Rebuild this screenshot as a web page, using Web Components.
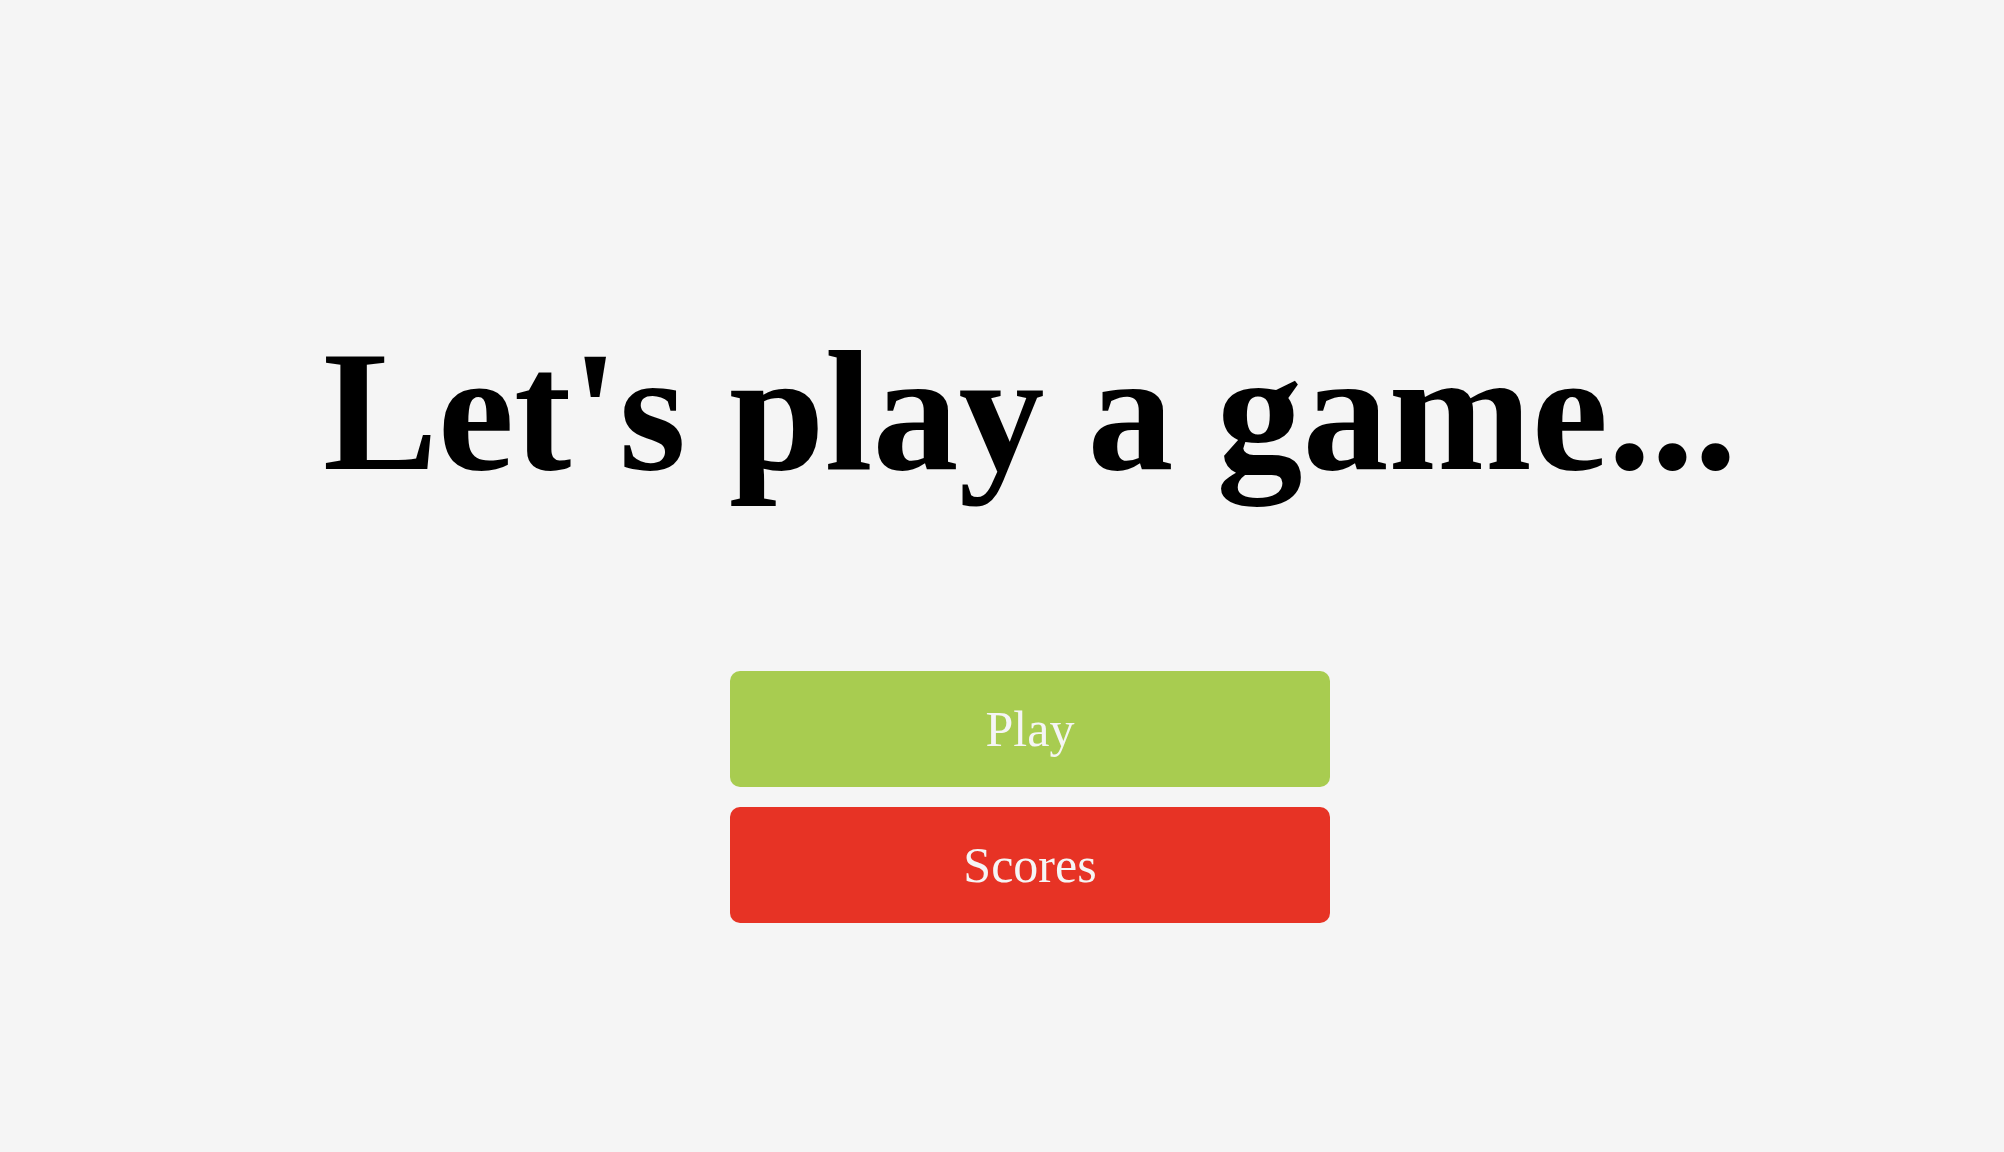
<!DOCTYPE html>
<html lang="en">
<head>
<meta charset="utf-8">
<meta name="viewport" content="width=device-width, initial-scale=1">
<title>Let's play a game...</title>
<style>
  body { margin: 0; background: #f5f5f5; font-family: "Liberation Serif", "Times New Roman", serif; }
</style>
</head>
<body>
<game-home>
  Let's play a game...
  <menu-button slot="actions" style="--button-color: #a8cc50">Play</menu-button>
  <menu-button slot="actions" style="--button-color: #e73325">Scores</menu-button>
</game-home>

<template id="home-template">
  <style>
    :host { display: flex; min-height: 100vh; box-sizing: border-box; padding: 78px 0 0 56px; }
    main { flex: 1; display: flex; flex-direction: column; align-items: center; justify-content: center; }
    h1 { margin: 0 0 156px; font-size: 172px; line-height: 208px; font-weight: 700; color: #000; text-align: center; }
    nav { display: flex; flex-direction: column; gap: 20px; width: 600px; max-width: 100%; }
  </style>
  <main>
    <h1><slot></slot></h1>
    <nav aria-label="Game menu"><slot name="actions"></slot></nav>
  </main>
</template>

<template id="button-template">
  <style>
    :host { display: block; }
    button {
      display: block; width: 100%; padding: 30px; border: 0; border-radius: 10px;
      background: var(--button-color); color: #f5f5f5;
      font: inherit; font-size: 50px; line-height: 56px; cursor: pointer;
    }
  </style>
  <button type="button"><slot></slot></button>
</template>

<script>
  const define = (name, templateId) => customElements.define(name, class extends HTMLElement {
    constructor() {
      super();
      this.attachShadow({ mode: "open" })
        .append(document.getElementById(templateId).content.cloneNode(true));
    }
  });
  define("menu-button", "button-template");
  define("game-home", "home-template");
</script>
</body>
</html>
